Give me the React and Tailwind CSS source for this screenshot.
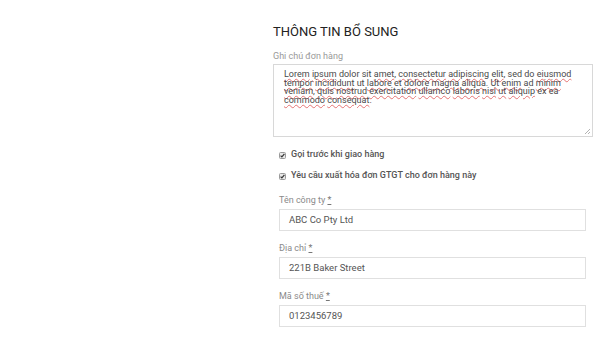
import React from 'react';

const sp = 'underline decoration-wavy decoration-[#e57373] decoration-1 underline-offset-[1px]';

const noteLines = [
    [['Lorem', 1], ['ipsum', 1], ['dolor', 0], ['sit', 0], ['amet,', 1], ['consectetur', 1], ['adipiscing', 1], ['elit,', 1], ['sed', 0], ['do', 0], ['eiusmod', 1]],
    [['tempor', 1], ['incididunt', 1], ['ut', 0], ['labore', 1], ['et', 0], ['dolore', 1], ['magna', 1], ['aliqua.', 1], ['Ut', 1], ['enim', 1], ['ad', 0], ['minim', 1]],
    [['veniam,', 1], ['quis', 1], ['nostrud', 1], ['exercitation', 1], ['ullamco', 1], ['laboris', 1], ['nisi', 1], ['ut', 1], ['aliquip', 1], ['ex', 0], ['ea', 0]],
    [['commodo', 1], ['consequat.', 1]],
];

function Word({ text, wrong }) {
    // keep trailing punctuation out of the squiggle
    const m = text.match(/^(.*?)([.,]?)$/);
    return (
        <span>
            <span className={wrong ? sp : ''}>{m[1]}</span>
            {m[2]}
        </span>
    );
}

function Check() {
    return (
        <svg width="7" height="7" viewBox="0 0 7 7" className="shrink-0">
            <rect x="0.5" y="0.5" width="6" height="6" rx="1" fill="#e8e8e8" stroke="#9a9a9a" />
            <path d="M1.6 3.6 L2.9 4.9 L5.4 1.9" fill="none" stroke="#333" strokeWidth="1.2" />
        </svg>
    );
}

function Field({ label, value, first }) {
    return (
        <div className={first ? 'mt-[12px]' : 'mt-[11px]'}>
            <div className="text-[9px] leading-[12px] text-[#8a8a8a]">
                {label} <span className="underline text-[#777]">*</span>
            </div>
            <div className="mt-[3px] h-[22px] border border-[#e0e0e0] bg-white flex items-center pl-[9px] text-[9.5px] text-[#555]">
                {value}
            </div>
        </div>
    );
}

export default function App() {
    return (
        <div className="w-[600px] h-[338px] bg-white overflow-hidden" style={{ fontFamily: 'Roboto, "Noto Sans", sans-serif' }}>
            <div className="pl-[273px] pt-[24px] w-[593px] box-content">
                <h3 className="text-[13px] leading-[16px] text-[#222] font-normal">THÔNG TIN BỔ SUNG</h3>

                <div className="mt-[10px] text-[9px] leading-[12px] text-[#999]">Ghi chú đơn hàng</div>

                <div className="relative mt-[2px] w-[320px] h-[73px] border border-[#d8d8d8] pl-[10px] pt-[5px] text-[9px] leading-[8.6px] text-[#4a4a4a]">
                    {noteLines.map((line, i) => (
                        <div key={i} className="whitespace-nowrap flex gap-x-[0.25em]">
                            {line.map(([w, bad], j) => (
                                <Word key={j} text={w} wrong={bad} />
                            ))}
                        </div>
                    ))}
                    <svg width="7" height="7" viewBox="0 0 7 7" className="absolute right-[1px] bottom-[1px]">
                        <path d="M1 6 L6 1 M4 6 L6 4" stroke="#a0a0a0" strokeWidth="0.8" />
                    </svg>
                </div>

                <div className="pl-[6px] w-[307px] box-content">
                    <label className="mt-[12px] h-[12px] flex items-center gap-[5px] text-[9px] font-medium text-[#555]">
                        <Check />
                        <span>Gọi trước khi giao hàng</span>
                    </label>
                    <label className="mt-[9px] h-[12px] flex items-center gap-[5px] text-[9px] font-medium text-[#555]">
                        <Check />
                        <span>Yêu cầu xuất hóa đơn GTGT cho đơn hàng này</span>
                    </label>

                    <Field first label="Tên công ty" value="ABC Co Pty Ltd" />
                    <Field label="Địa chỉ" value="221B Baker Street" />
                    <Field label="Mã số thuế" value="0123456789" />
                </div>
            </div>
        </div>
    );
}
